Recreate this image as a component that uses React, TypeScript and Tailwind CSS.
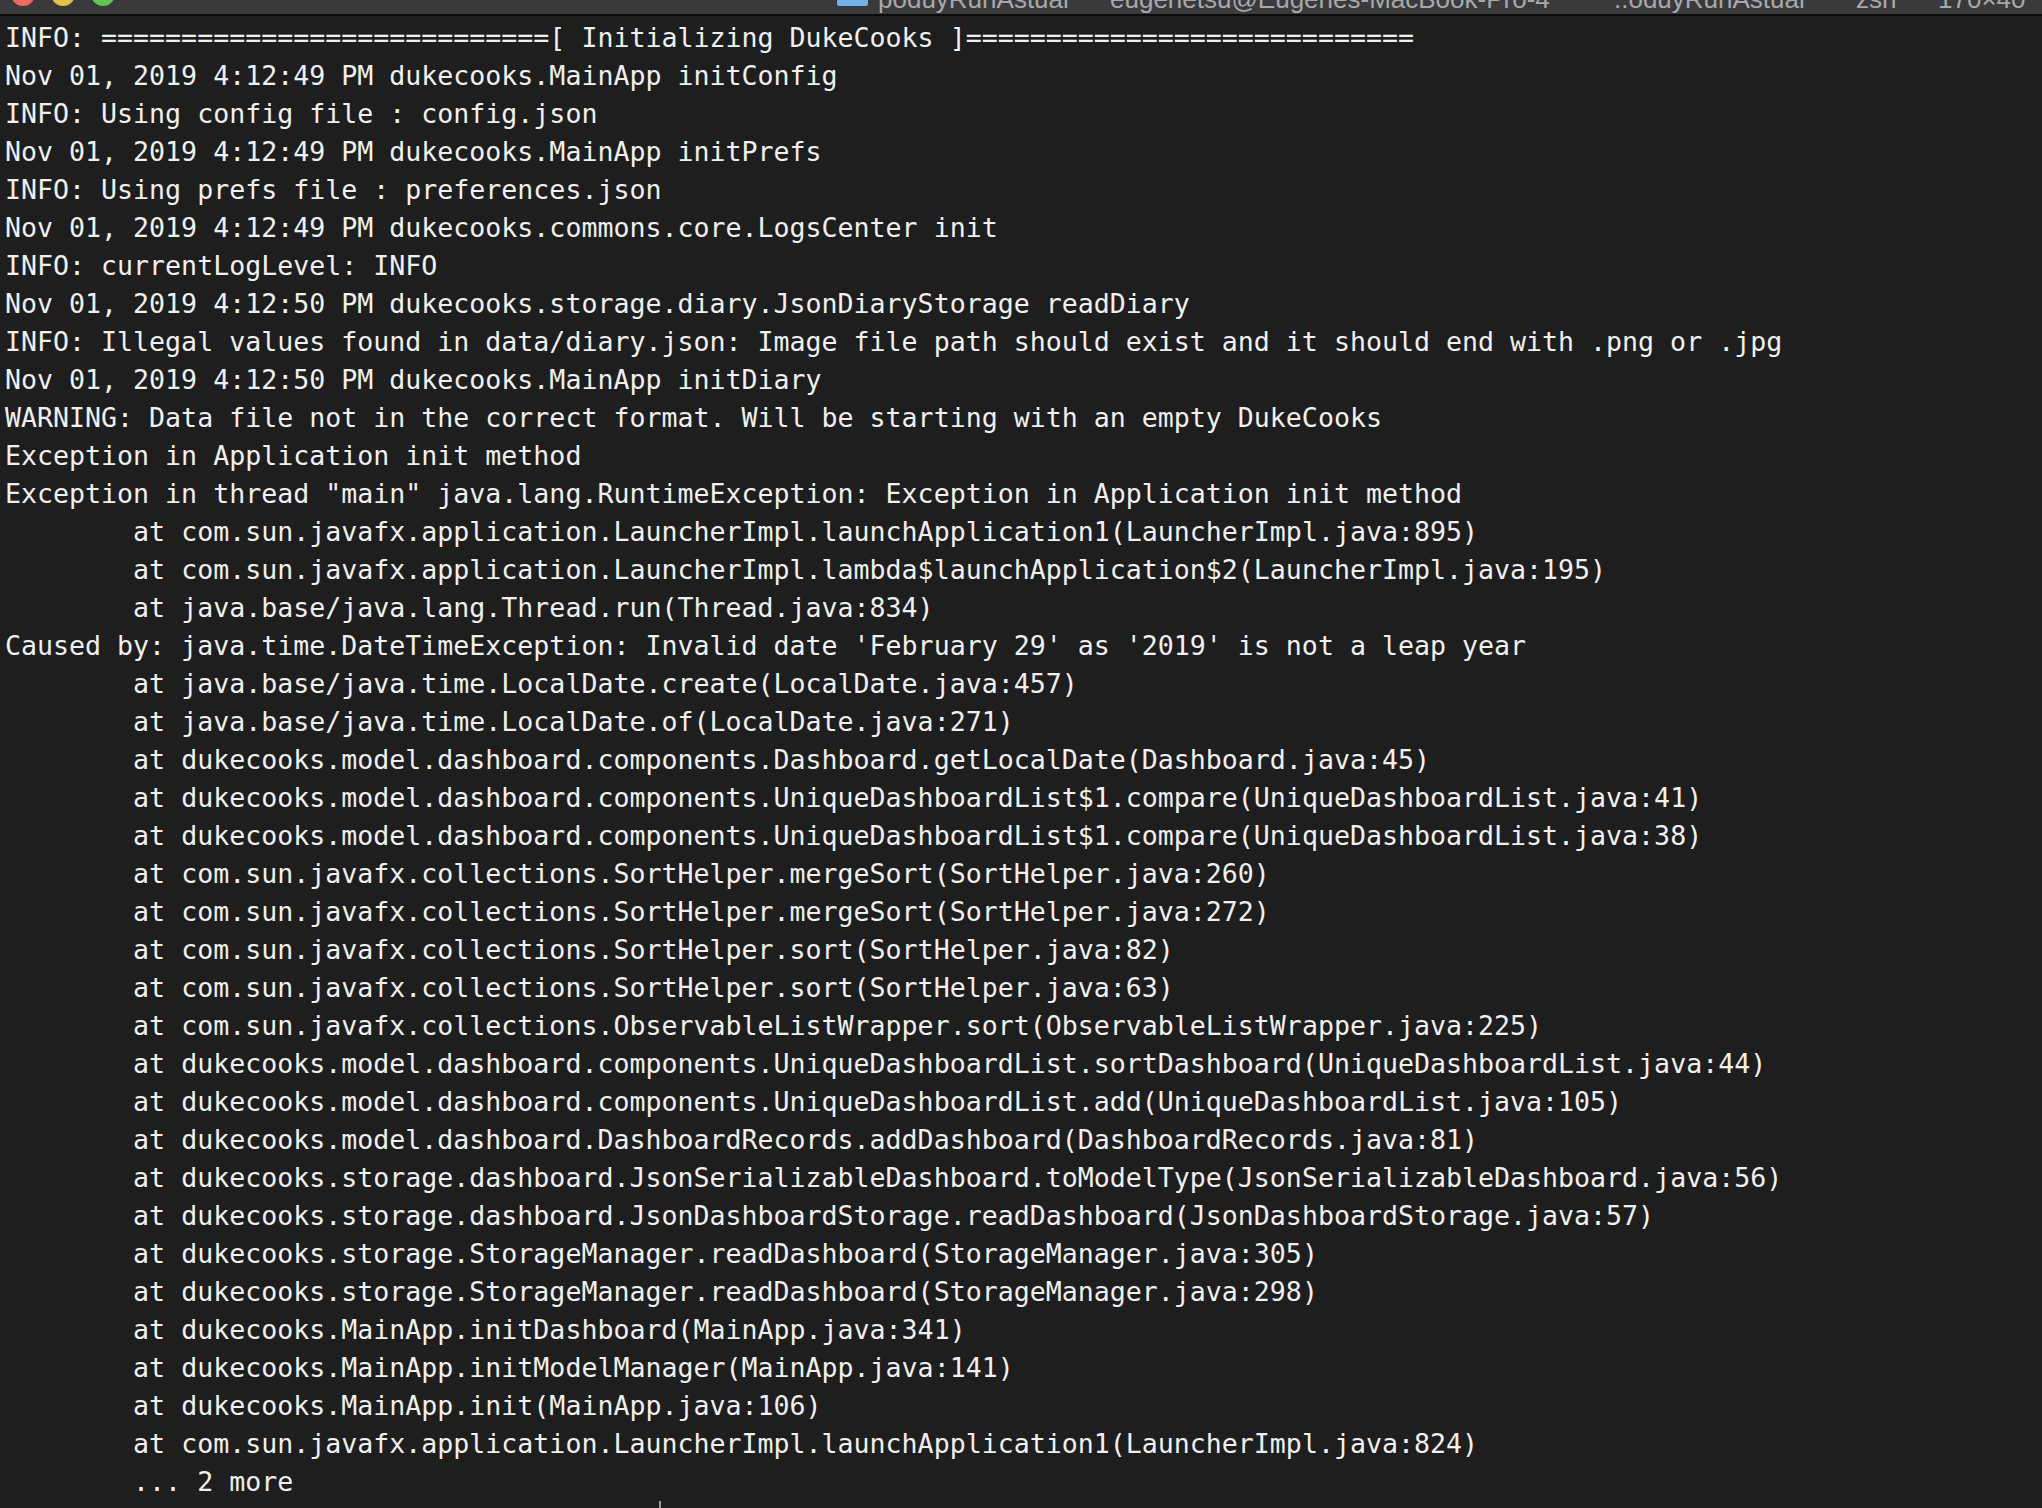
const lines: string[] = [
  "INFO: ============================[ Initializing DukeCooks ]============================",
  "Nov 01, 2019 4:12:49 PM dukecooks.MainApp initConfig",
  "INFO: Using config file : config.json",
  "Nov 01, 2019 4:12:49 PM dukecooks.MainApp initPrefs",
  "INFO: Using prefs file : preferences.json",
  "Nov 01, 2019 4:12:49 PM dukecooks.commons.core.LogsCenter init",
  "INFO: currentLogLevel: INFO",
  "Nov 01, 2019 4:12:50 PM dukecooks.storage.diary.JsonDiaryStorage readDiary",
  "INFO: Illegal values found in data/diary.json: Image file path should exist and it should end with .png or .jpg",
  "Nov 01, 2019 4:12:50 PM dukecooks.MainApp initDiary",
  "WARNING: Data file not in the correct format. Will be starting with an empty DukeCooks",
  "Exception in Application init method",
  'Exception in thread "main" java.lang.RuntimeException: Exception in Application init method',
  "\tat com.sun.javafx.application.LauncherImpl.launchApplication1(LauncherImpl.java:895)",
  "\tat com.sun.javafx.application.LauncherImpl.lambda$launchApplication$2(LauncherImpl.java:195)",
  "\tat java.base/java.lang.Thread.run(Thread.java:834)",
  "Caused by: java.time.DateTimeException: Invalid date 'February 29' as '2019' is not a leap year",
  "\tat java.base/java.time.LocalDate.create(LocalDate.java:457)",
  "\tat java.base/java.time.LocalDate.of(LocalDate.java:271)",
  "\tat dukecooks.model.dashboard.components.Dashboard.getLocalDate(Dashboard.java:45)",
  "\tat dukecooks.model.dashboard.components.UniqueDashboardList$1.compare(UniqueDashboardList.java:41)",
  "\tat dukecooks.model.dashboard.components.UniqueDashboardList$1.compare(UniqueDashboardList.java:38)",
  "\tat com.sun.javafx.collections.SortHelper.mergeSort(SortHelper.java:260)",
  "\tat com.sun.javafx.collections.SortHelper.mergeSort(SortHelper.java:272)",
  "\tat com.sun.javafx.collections.SortHelper.sort(SortHelper.java:82)",
  "\tat com.sun.javafx.collections.SortHelper.sort(SortHelper.java:63)",
  "\tat com.sun.javafx.collections.ObservableListWrapper.sort(ObservableListWrapper.java:225)",
  "\tat dukecooks.model.dashboard.components.UniqueDashboardList.sortDashboard(UniqueDashboardList.java:44)",
  "\tat dukecooks.model.dashboard.components.UniqueDashboardList.add(UniqueDashboardList.java:105)",
  "\tat dukecooks.model.dashboard.DashboardRecords.addDashboard(DashboardRecords.java:81)",
  "\tat dukecooks.storage.dashboard.JsonSerializableDashboard.toModelType(JsonSerializableDashboard.java:56)",
  "\tat dukecooks.storage.dashboard.JsonDashboardStorage.readDashboard(JsonDashboardStorage.java:57)",
  "\tat dukecooks.storage.StorageManager.readDashboard(StorageManager.java:305)",
  "\tat dukecooks.storage.StorageManager.readDashboard(StorageManager.java:298)",
  "\tat dukecooks.MainApp.initDashboard(MainApp.java:341)",
  "\tat dukecooks.MainApp.initModelManager(MainApp.java:141)",
  "\tat dukecooks.MainApp.init(MainApp.java:106)",
  "\tat com.sun.javafx.application.LauncherImpl.launchApplication1(LauncherImpl.java:824)",
  "\t... 2 more",
];

function TitleBar() {
  return (
    <div className="h-[16px] border-b-2 border-[#0b0b0b] bg-[#3a3a3c] overflow-hidden">
      <div className="flex items-start h-[14px] font-['Liberation_Sans',sans-serif] text-[26px] leading-[26px] text-[#a8a8aa]">
        <div className="flex gap-[16px] pl-[11px] -mt-[18px] shrink-0">
          <span className="size-[24px] rounded-full bg-[#ed6a5e]" />
          <span className="size-[24px] rounded-full bg-[#e5c04b]" />
          <span className="size-[24px] rounded-full bg-[#61c454]" />
        </div>
        <span className="ml-[722px] -mt-[6px] h-[12px] w-[31px] shrink-0 rounded-b-[2px] bg-[#6fb3e8]" />
        <span className="ml-[10px] -mt-[14px] w-[232px] shrink-0">poduyRunAstual</span>
        <span className="-mt-[14px] w-[504px] shrink-0">eugenetsu@Eugenes-MacBook-Pro-4</span>
        <span className="-mt-[14px] w-[242px] shrink-0">..oduyRunAstual</span>
        <span className="-mt-[14px] w-[82px] shrink-0">zsh</span>
        <span className="-mt-[14px] shrink-0">170×40</span>
      </div>
    </div>
  );
}

export default function App() {
  return (
    <div className="h-[1508px] w-full overflow-hidden bg-[#1e1e1e]">
      <TitleBar />
      <div className="pt-[2.5px] pl-[5px] font-['DejaVu_Sans_Mono',monospace] text-[26.6px] leading-[38px] text-[#f0f0f0] whitespace-pre [tab-size:8]">
        {lines.map((l, i) => (
          <div key={i}>{l}</div>
        ))}
        <div className="flex items-start">
          <span>{"➜  poduyRunAstual git:(master)"}</span>
          <span className="text-[#c678dd]">✗</span>
          <span>{" ./gradl"}</span>
          <span className="text-[#c678dd]">e</span>
          <span className="ml-[14px] h-[38px] w-[2px] bg-[#9a9a9a]" />
        </div>
      </div>
    </div>
  );
}
